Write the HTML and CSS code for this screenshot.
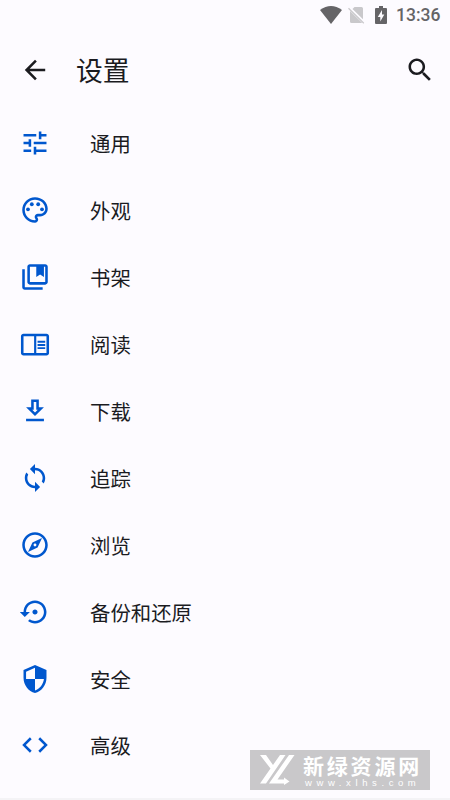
FILE: index.html
```html
<!DOCTYPE html>
<html lang="zh-CN">
<head>
<meta charset="utf-8">
<title>设置</title>
<link rel="stylesheet" href="styles.css">
</head>
<body>
<div class="status">
  <svg class="wifi" viewBox="0 0 22 18"><path d="M0 4Q11-4 22 4L11 18z"/></svg>
  <svg class="nosim" viewBox="0 0 18 18"><path d="M6.500 1H13.500Q15 1 15 2.500V13.200L4.500 3zM2 5L14 16.800Q13.800 17 13.300 17H3.500Q2 17 2 15.500z"/><path class="slash" d="M.5 2.300L15.800 17.300"/></svg>
  <svg class="battery" viewBox="0 0 12 18"><path fill-rule="evenodd" d="M4 0h4v2h3q1 0 1 1v14q0 1-1 1H1q-1 0-1-1V3q0-1 1-1h3zM7 4L2.800 11H5.300V15.500L9.300 8.500H7z"/></svg>
  <span class="clock">13:36</span>
</div>
<header class="bar">
  <svg class="icon back" viewBox="0 0 24 24"><path d="M20 11H7.830l5.590-5.590L12 4l-8 8 8 8 1.410-1.410L7.830 13H20v-2z"/></svg>
  <h1>设置</h1>
  <svg class="icon search" viewBox="0 0 24 24"><path d="M15.500 14h-.79l-.28-.27C15.410 12.590 16 11.110 16 9.500 16 5.910 13.090 3 9.500 3S3 5.910 3 9.500 5.910 16 9.500 16c1.610 0 3.090-.59 4.230-1.570l.27.28v.79l5 4.990L20.490 19l-4.990-5zm-6 0C7.010 14 5 11.990 5 9.500S7.010 5 9.500 5 14 7.010 14 9.500 11.990 14 9.500 14z"/></svg>
</header>
<main class="list">
  <div class="row"><svg class="icon" viewBox="0 0 24 24"><path d="M3 17v2h6v-2H3zM3 5v2h10V5H3zm10 16v-2h8v-2h-8v-2h-2v6h2zM7 9v2H3v2h4v2h2V9H7zm14 4v-2H11v2h10zm-6-4h2V7h4V5h-4V3h-2v6z"/></svg><span>通用</span></div>
  <div class="row"><svg class="icon" viewBox="0 0 24 24"><path d="M12 22C6.490 22 2 17.510 2 12S6.490 2 12 2s10 4.040 10 9c0 3.310-2.690 6-6 6h-1.770c-.28 0-.5.22-.5.5 0 .12.05.23.13.33.41.47.64 1.060.64 1.670 0 1.380-1.120 2.500-2.500 2.500zm0-18c-4.410 0-8 3.590-8 8s3.590 8 8 8c.28 0 .5-.22.5-.5 0-.16-.08-.28-.14-.35-.41-.46-.63-1.050-.63-1.650 0-1.380 1.120-2.500 2.500-2.500H16c2.210 0 4-1.790 4-4 0-3.860-3.590-7-8-7z"/><circle cx="6.500" cy="11.500" r="1.500"/><circle cx="9.500" cy="7.500" r="1.500"/><circle cx="14.500" cy="7.500" r="1.500"/><circle cx="17.500" cy="11.500" r="1.500"/></svg><span>外观</span></div>
  <div class="row"><svg class="icon" viewBox="0 0 24 24"><path d="M4 6H2v14c0 1.100.9 2 2 2h14v-2H4V6z"/><path d="M20 2H8c-1.100 0-2 .9-2 2v12c0 1.100.9 2 2 2h12c1.100 0 2-.9 2-2V4c0-1.100-.9-2-2-2zm0 14H8V4h5v8l3-2 3 2V4h1v12z"/></svg><span>书架</span></div>
  <div class="row"><svg class="icon" viewBox="0 0 24 24"><path fill-rule="evenodd" d="M21 4H3c-1.100 0-2 .9-2 2v13c0 1.100.9 2 2 2h18c1.100 0 2-.9 2-2V6c0-1.100-.9-2-2-2zM3 19V6h8.300v13H3zm18 0h-8V6h8v13z"/><path d="M14 9.500h6V11h-6zM14 12h6v1.500h-6zM14 14.500h6V16h-6z"/></svg><span>阅读</span></div>
  <div class="row"><svg class="icon" viewBox="0 0 24 24"><path d="M19 9h-4V3H9v6H5l7 7 7-7zm-8 2V5h2v6h1.170L12 13.170 9.830 11H11zm-6 7h14v2H5z"/></svg><span>下载</span></div>
  <div class="row"><svg class="icon" viewBox="0 0 24 24"><path d="M12 4V1L8 5l4 4V6c3.310 0 6 2.690 6 6 0 1.010-.25 1.970-.7 2.800l1.460 1.460C19.540 15.030 20 13.570 20 12c0-4.420-3.580-8-8-8zm0 14c-3.310 0-6-2.690-6-6 0-1.010.25-1.970.7-2.800L5.240 7.740C4.460 8.970 4 10.430 4 12c0 4.420 3.580 8 8 8v3l4-4-4-4v3z"/></svg><span>追踪</span></div>
  <div class="row"><svg class="icon" viewBox="0 0 24 24"><path d="M12 2C6.480 2 2 6.480 2 12s4.480 10 10 10 10-4.480 10-10S17.520 2 12 2zm0 18c-4.410 0-8-3.590-8-8s3.590-8 8-8 8 3.590 8 8-3.590 8-8 8zm-5.500-2.500l7.510-3.490L17.500 6.500 9.990 9.990 6.500 17.500zm5.500-6.600c.61 0 1.100.49 1.100 1.100s-.49 1.100-1.100 1.100-1.100-.49-1.100-1.100.49-1.100 1.100-1.100z"/></svg><span>浏览</span></div>
  <div class="row"><svg class="icon" viewBox="0 0 24 24"><path d="M14 12c0-1.100-.9-2-2-2s-2 .9-2 2 .9 2 2 2 2-.9 2-2zm-2-9c-4.970 0-9 4.030-9 9H0l4 4 4-4H5c0-3.870 3.130-7 7-7s7 3.130 7 7-3.130 7-7 7c-1.510 0-2.910-.49-4.060-1.300l-1.420 1.440C8.040 20.300 9.940 21 12 21c4.970 0 9-4.030 9-9s-4.030-9-9-9z"/></svg><span>备份和还原</span></div>
  <div class="row"><svg class="icon" viewBox="0 0 24 24"><path d="M12 1L3 5v6c0 5.550 3.840 10.740 9 12 5.160-1.260 9-6.450 9-12V5l-9-4zm0 10.990h7c-.53 4.120-3.280 7.790-7 8.940V12H5V6.300l7-3.110v8.800z"/></svg><span>安全</span></div>
  <div class="row"><svg class="icon" viewBox="0 0 24 24"><path d="M9.400 16.600L4.800 12l4.600-4.600L8 6l-6 6 6 6 1.400-1.400zm5.200 0l4.600-4.600-4.600-4.600L16 6l6 6-6 6-1.400-1.400z"/></svg><span>高级</span></div>
</main>
<div class="mark">
  <svg viewBox="0 0 36 32"><path d="M0 1H6L13 11 20 1H25.500L6 29.500H0L10.500 14.500z"/><path d="M29 1H34.500L17.500 25.500H24V23.500L29.500 27.500 24 31V29.500H9z"/></svg>
  <div class="words"><b>新绿资源网</b><i>www.xlhs.com</i></div>
</div>
</body>
</html>
```
FILE: styles.css
```css
* { box-sizing: border-box; }
body {
  margin: 0;
  width: 450px;
  height: 800px;
  overflow: hidden;
  background: #fdfbff;
  border-bottom: 2px solid #f4f3f6;
  color: #1b1b1f;
  font-family: "Noto Sans CJK SC", sans-serif;
}
svg { display: block; flex: none; }
.status {
  display: flex;
  align-items: center;
  justify-content: flex-end;
  height: 30px;
  padding-right: 10px;
  fill: #656467;
}
.wifi { width: 22px; height: 18px; margin-right: -1px; }
.nosim { width: 18px; height: 18px; margin-left: 7px; fill: #c9c8cb; }
.slash { stroke: #c9c8cb; stroke-width: 1.2; }
.battery { width: 12px; height: 18px; margin-left: 9px; }
.clock {
  margin-left: 9px;
  width: 44px;
  font: 500 17.5px/30px Roboto, sans-serif;
  color: #656467;
  white-space: nowrap;
}
.icon { width: 32px; height: 32px; padding: 0.7px; }
.bar {
  display: flex;
  align-items: center;
  height: 80px;
  padding: 0 14px 0 19px;
  fill: #1b1b1f;
}
h1 {
  flex: 1;
  margin: 0 0 0 25px;
  font-size: 26.8px;
  line-height: 40px;
  font-weight: 400;
}
.row {
  display: flex;
  align-items: center;
  gap: 39px;
  height: 66.9px;
  padding-left: 19px;
  fill: #0057ce;
  font-size: 20.4px;
  line-height: 30px;
}
.mark {
  position: absolute;
  left: 250px;
  top: 750px;
  width: 180px;
  height: 40px;
  display: flex;
  padding: 4px 0 0 10px;
  gap: 7px;
  background: #c9c8ca;
  color: #fff;
  fill: #fff;
}
.mark svg { width: 36px; height: 32px; }
.words { display: flex; flex-direction: column; }
.words b {
  font-size: 21px;
  line-height: 22px;
  font-weight: 700;
  letter-spacing: 2.8px;
  white-space: nowrap;
}
.words i {
  margin: 1px 0 0 2px;
  font: 400 9.500px/11px "Liberation Sans", sans-serif;
  letter-spacing: 4.6px;
}
```
